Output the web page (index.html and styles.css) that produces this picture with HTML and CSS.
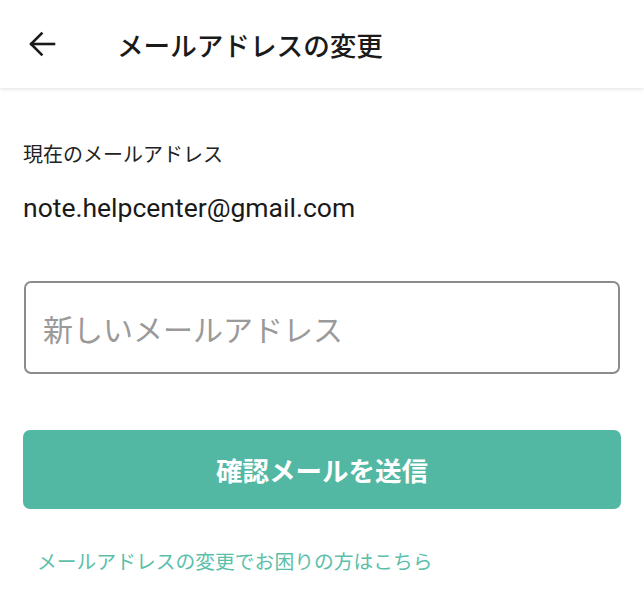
FILE: index.html
```html
<!DOCTYPE html>
<html lang="ja">
<head>
<meta charset="utf-8">
<link rel="stylesheet" href="styles.css">
</head>
<body>
<header class="appbar">
  <button class="back" aria-label="戻る">
    <svg width="28" height="28" viewBox="0 0 28 28" fill="none" stroke="#1a1a1a" stroke-width="2.6" stroke-linecap="square">
      <path d="M26 14H3.5"/>
      <path d="M13.5 3.5L3 14l10.5 10.5"/>
    </svg>
  </button>
  <h1 class="title">メールアドレスの変更</h1>
</header>
<main class="content">
  <p class="label">現在のメールアドレス</p>
  <p class="current">note.helpcenter@gmail.com</p>
  <input class="field" type="email" placeholder="新しいメールアドレス">
  <button class="submit">確認メールを送信</button>
  <a class="help" href="#">メールアドレスの変更でお困りの方はこちら</a>
</main>
</body>
</html>
```

FILE: styles.css
```css
* { box-sizing: border-box; }
html, body { margin: 0; padding: 0; background: #fff; }
body {
  font-family: Roboto, "Noto Sans CJK JP", sans-serif;
  color: #1a1a1a;
  width: 644px;
}
.appbar {
  height: 88px;
  display: flex;
  align-items: center;
  padding-left: 28px;
  box-shadow: 0 1px 4px rgba(0,0,0,0.12);
  position: relative;
}
.back {
  border: 0;
  background: none;
  padding: 0;
  width: 28px;
  height: 28px;
  display: flex;
  margin-right: 61px;
}
.title {
  margin: 0;
  font-family: "Noto Sans CJK JP", sans-serif;
  font-size: 26.6px;
  font-weight: 500;
  letter-spacing: 0;
  color: #1a1a1a;
}
.content {
  padding: 0 23px;
  display: flex;
  flex-direction: column;
}
.label {
  margin: 52px 0 0;
  font-family: "Noto Sans CJK JP", sans-serif;
  font-size: 20px;
  line-height: 28px;
  color: #222;
}
.current {
  margin: 25px 0 0;
  font-size: 26.5px;
  line-height: 30px;
  color: #1a1a1a;
}
.field {
  margin-top: 58px;
  margin-left: 1px;
  width: 596px;
  height: 93px;
  border: 2px solid #8c8c8c;
  border-radius: 7px;
  padding: 0 17px;
  font-family: "Noto Sans CJK JP", sans-serif;
  font-size: 30px;
  outline: none;
}
.field::placeholder { color: #9a9a9a; }
.submit {
  margin-top: 56px;
  height: 79px;
  width: 598px;
  border: 0;
  border-radius: 7px;
  background: #53b8a3;
  color: #fff;
  font-family: "Noto Sans CJK JP", sans-serif;
  font-size: 26.5px;
  font-weight: 700;
}
.help {
  margin-top: 38px;
  margin-left: 14px;
  font-family: "Noto Sans CJK JP", sans-serif;
  font-size: 19.8px;
  line-height: 28px;
  color: #5bbfaa;
  text-decoration: none;
}
```
